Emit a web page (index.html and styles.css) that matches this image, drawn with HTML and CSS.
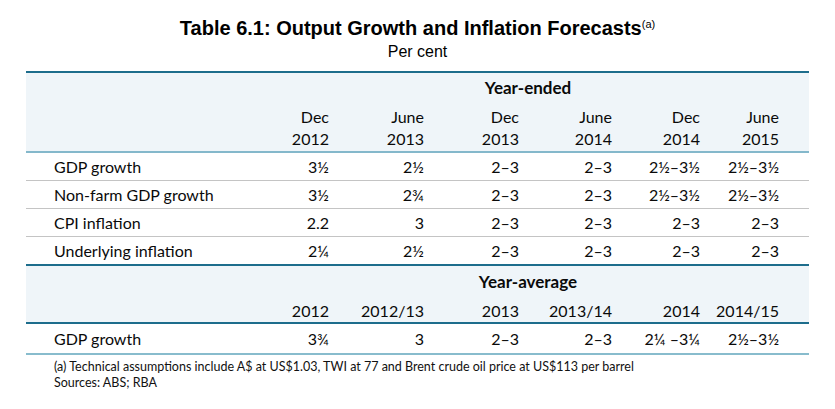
FILE: index.html
```html
<!DOCTYPE html>
<html>
<head>
<meta charset="utf-8">
<link rel="stylesheet" href="styles.css">
</head>
<body>
<div class="page">
  <h1 class="title">Table 6.1: Output Growth and Inflation Forecasts<sup class="note">(a)</sup></h1>
  <div class="subtitle">Per cent</div>
  <table class="tbl">
    <colgroup>
      <col class="c-label"><col class="c1"><col class="c2"><col class="c3"><col class="c4"><col class="c5"><col class="c6">
    </colgroup>
    <thead class="head head-top">
      <tr class="group-row"><th></th><th colspan="6" class="group">Year-ended</th></tr>
      <tr class="period-row">
        <th></th>
        <th>Dec<br>2012</th><th>June<br>2013</th><th>Dec<br>2013</th><th>June<br>2014</th><th>Dec<br>2014</th><th class="last">June<br>2015</th>
      </tr>
    </thead>
    <tbody class="body">
      <tr><td class="label">GDP growth</td><td>3½</td><td>2½</td><td>2–3</td><td>2–3</td><td>2½–3½</td><td class="last">2½–3½</td></tr>
      <tr><td class="label">Non-farm GDP growth</td><td>3½</td><td>2¾</td><td>2–3</td><td>2–3</td><td>2½–3½</td><td class="last">2½–3½</td></tr>
      <tr><td class="label">CPI inflation</td><td>2.2</td><td>3</td><td>2–3</td><td>2–3</td><td>2–3</td><td class="last">2–3</td></tr>
      <tr><td class="label">Underlying inflation</td><td>2¼</td><td>2½</td><td>2–3</td><td>2–3</td><td>2–3</td><td class="last">2–3</td></tr>
    </tbody>
    <thead class="head head-avg">
      <tr class="group-row"><th></th><th colspan="6" class="group">Year-average</th></tr>
      <tr class="period-row single">
        <th></th>
        <th>2012</th><th>2012/13</th><th>2013</th><th>2013/14</th><th>2014</th><th class="last">2014/15</th>
      </tr>
    </thead>
    <tbody class="body body-avg">
      <tr><td class="label">GDP growth</td><td>3¾</td><td>3</td><td>2–3</td><td>2–3</td><td>2¼ –3¼</td><td class="last">2½–3½</td></tr>
    </tbody>
  </table>
  <div class="footnotes">
    <p>(a) Technical assumptions include A$ at US$1.03, TWI at 77 and Brent crude oil price at US$113 per barrel</p>
    <p>Sources: ABS; RBA</p>
  </div>
</div>
</body>
</html>
```
FILE: styles.css
```css
html, body {
  margin: 0;
  padding: 0;
  background: #ffffff;
}
.page {
  width: 835px;
  padding-top: 17px;
  color: #111111;
}
.title {
  margin: 0;
  text-align: center;
  font-family: "Liberation Sans Narrow", "Liberation Sans", Arial, sans-serif;
  font-weight: bold;
  font-size: 20px;
  line-height: 23px;
  color: #000;
}
.note {
  font-size: 11px;
  font-weight: normal;
  vertical-align: 7px;
  line-height: 0;
}
.subtitle {
  margin-top: 3px;
  text-align: center;
  font-family: "Liberation Sans Narrow", "Liberation Sans", Arial, sans-serif;
  font-size: 16px;
  line-height: 18px;
  color: #000;
}
.tbl {
  margin: 10px auto 0;
  width: 783px;
  border-collapse: collapse;
  table-layout: fixed;
  font-family: Lato, "Open Sans", sans-serif;
  font-size: 16px;
  color: #0a0a0a;
}
.c-label { width: 209px; }
.c1 { width: 94px; }
.c2 { width: 95px; }
.c3 { width: 95px; }
.c4 { width: 93px; }
.c5 { width: 88px; }
.c6 { width: 109px; }
.tbl th, .tbl td {
  padding: 0;
  text-align: right;
  font-weight: normal;
}
.tbl .last { padding-right: 30px; }
.head th { background: #eff5f9; }
.head-top { border-top: 2px solid #1d6d8c; }
.head-avg { border-top: 2px solid #1d6d8c; }
.group {
  text-align: center !important;
  font-weight: bold !important;
  font-size: 17px;
  padding-left: 12px !important;
}
.head-top .group-row th { height: 25px; vertical-align: bottom; line-height: 20px; }
.head-top .period-row th { height: 52px; line-height: 22px; vertical-align: bottom; padding-bottom: 1px; }
.head-top .period-row { border-bottom: 2px solid #84b8cb; }
.head-avg .group-row th { height: 26px; vertical-align: bottom; line-height: 20px; }
.head-avg .period-row th { height: 29px; line-height: 20px; vertical-align: bottom; padding-bottom: 1px; }
.head-avg .period-row { border-bottom: 2px solid #1d6d8c; }
.body td { height: 27px; line-height: 20px; border-bottom: 1px solid #c4c4c4; }
.body tr:last-child td { border-bottom: 2px solid #1d6d8c; }
.body-avg td { height: 29px; }
.body-avg tr:last-child td { border-bottom: 2px solid #88bccd; }
.label {
  text-align: left !important;
  padding-left: 28px !important;
}
.footnotes {
  width: 783px;
  margin: 4px auto 0;
  font-family: Lato, "Open Sans", sans-serif;
  font-size: 12.5px;
  line-height: 16px;
  color: #111;
}
.footnotes p {
  margin: 0 0 0 28px;
}
```
